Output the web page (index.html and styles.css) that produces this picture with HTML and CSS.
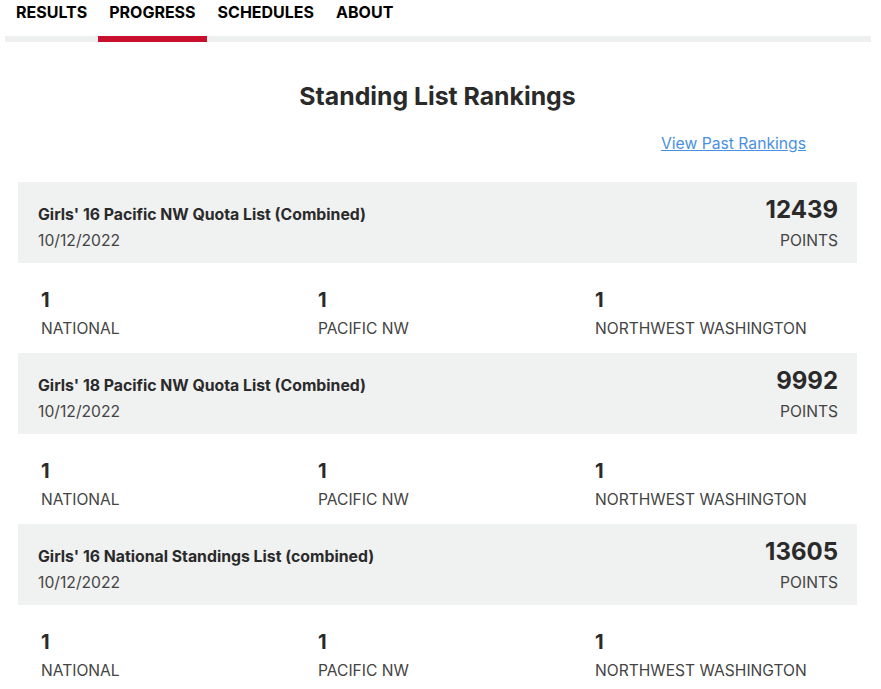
FILE: index.html
```html
<!DOCTYPE html>
<html>
<head>
<meta charset="utf-8">
<link rel="stylesheet" href="styles.css">
</head>
<body>
<div class="page">
  <nav class="tabs">
    <a class="tab">RESULTS</a>
    <a class="tab active">PROGRESS</a>
    <a class="tab">SCHEDULES</a>
    <a class="tab">ABOUT</a>
  </nav>
  <main class="content">
    <h1 class="title">Standing List Rankings</h1>
    <div class="link-row"><a class="past-link" href="#">View Past Rankings</a></div>

    <section class="ranking">
      <div class="rank-head">
        <div class="rank-info">
          <div class="rank-name">Girls' 16 Pacific NW Quota List (Combined)</div>
          <div class="rank-date">10/12/2022</div>
        </div>
        <div class="rank-points">
          <div class="points-num">12439</div>
          <div class="points-label">POINTS</div>
        </div>
      </div>
      <div class="rank-cols">
        <div class="col"><div class="col-num">1</div><div class="col-label">NATIONAL</div></div>
        <div class="col"><div class="col-num">1</div><div class="col-label">PACIFIC NW</div></div>
        <div class="col"><div class="col-num">1</div><div class="col-label">NORTHWEST WASHINGTON</div></div>
      </div>
    </section>

    <section class="ranking">
      <div class="rank-head">
        <div class="rank-info">
          <div class="rank-name">Girls' 18 Pacific NW Quota List (Combined)</div>
          <div class="rank-date">10/12/2022</div>
        </div>
        <div class="rank-points">
          <div class="points-num">9992</div>
          <div class="points-label">POINTS</div>
        </div>
      </div>
      <div class="rank-cols">
        <div class="col"><div class="col-num">1</div><div class="col-label">NATIONAL</div></div>
        <div class="col"><div class="col-num">1</div><div class="col-label">PACIFIC NW</div></div>
        <div class="col"><div class="col-num">1</div><div class="col-label">NORTHWEST WASHINGTON</div></div>
      </div>
    </section>

    <section class="ranking">
      <div class="rank-head">
        <div class="rank-info">
          <div class="rank-name">Girls' 16 National Standings List (combined)</div>
          <div class="rank-date">10/12/2022</div>
        </div>
        <div class="rank-points">
          <div class="points-num">13605</div>
          <div class="points-label">POINTS</div>
        </div>
      </div>
      <div class="rank-cols">
        <div class="col"><div class="col-num">1</div><div class="col-label">NATIONAL</div></div>
        <div class="col"><div class="col-num">1</div><div class="col-label">PACIFIC NW</div></div>
        <div class="col"><div class="col-num">1</div><div class="col-label">NORTHWEST WASHINGTON</div></div>
      </div>
    </section>
  </main>
</div>
</body>
</html>
```

FILE: styles.css
```css
html, body {
  margin: 0;
  padding: 0;
  background: #fff;
}
body {
  font-family: Inter, Roboto, "Liberation Sans", sans-serif;
  color: #2a2a2a;
}
.page {
  margin: 0 10px 0 5px;
}
.tabs {
  display: flex;
  border-bottom: 6px solid #eeefef;
  height: 36px;
}
.tab {
  display: block;
  padding: 1px 11px 0;
  font-size: 16px;
  font-weight: 700;
  color: #000;
  line-height: 22px;
  position: relative;
}
.tab.active::after {
  content: "";
  position: absolute;
  left: 0;
  right: 0;
  top: 36px;
  height: 6px;
  background: #c8102e;
}
.content {
  padding: 0 14px 0 13px;
}
.title {
  margin: 0;
  padding-top: 38px;
  text-align: center;
  font-size: 24.8px;
  font-weight: 700;
  line-height: 32px;
  color: #2a2a2a;
}
.link-row {
  display: flex;
  justify-content: flex-end;
  padding: 22px 51px 0 0;
  height: 70px;
  box-sizing: border-box;
}
.past-link {
  font-size: 15.7px;
  color: #4a90e2;
  text-decoration: underline;
  line-height: 20px;
}
.ranking {
  display: block;
}
.rank-head {
  background: #f0f1f1;
  height: 81px;
  box-sizing: border-box;
  display: flex;
  justify-content: space-between;
  padding: 14px 19px 0 20px;
}
.rank-info {
  padding-top: 9px;
}
.rank-name {
  font-size: 15.8px;
  font-weight: 700;
  line-height: 20px;
  color: #2a2a2a;
}
.rank-date {
  font-size: 15.7px;
  color: #444;
  line-height: 20px;
  margin-top: 6px;
}
.rank-points {
  text-align: right;
}
.points-num {
  font-size: 24px;
  font-weight: 700;
  line-height: 28px;
  color: #2a2a2a;
}
.points-label {
  font-size: 15.6px;
  color: #444;
  line-height: 20px;
  margin-top: 7px;
}
.rank-cols {
  display: grid;
  grid-template-columns: 277px 277px 277px;
  height: 90px;
  box-sizing: border-box;
  padding: 25px 0 0 23px;
}
.col-num {
  font-size: 20px;
  font-weight: 700;
  line-height: 24px;
  color: #2a2a2a;
}
.col-label {
  font-size: 15.6px;
  color: #444;
  line-height: 20px;
  margin-top: 7px;
}
```
